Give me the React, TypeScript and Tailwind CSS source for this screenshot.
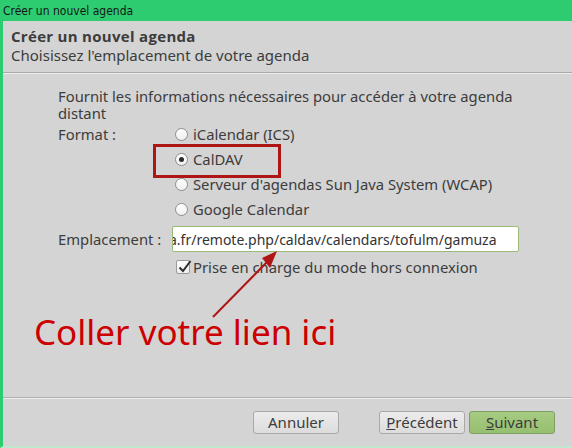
import React from "react";

const FormatRow = ({ label, checked = false }: { label: string; checked?: boolean }) => (
    <div className="h-[25px] flex items-center gap-[5px] pl-[3px]">
        <span className="w-[13px] h-[13px] rounded-full border border-[#8e8e8e] bg-gradient-to-b from-white to-[#f0f0f0] flex items-center justify-center shrink-0">
            {checked && <span className="w-[5px] h-[5px] rounded-full bg-[#2a2a2a]" />}
        </span>
        <span>{label}</span>
    </div>
);

const Button = ({ children, primary = false }: { children: React.ReactNode; primary?: boolean }) => (
    <div
        className={
            "w-[86px] h-[23px] flex items-center justify-center rounded-[3px] border " +
            (primary
                ? "bg-gradient-to-b from-[#a6cb82] to-[#97bf70] border-[#7f9f62]"
                : "bg-gradient-to-b from-[#ececec] to-[#dcdcdc] border-[#a9a9a9]")
        }
    >
        {children}
    </div>
);

export default function App() {
    return (
        <div
            className="relative w-[572px] h-[448px] overflow-hidden flex flex-col bg-[#d4d4d4] text-[#3c3c3c] text-[14.8px]"
            style={{ fontFamily: '"Noto Sans", sans-serif' }}
        >
            {/* Title bar */}
            <div
                className="h-[21px] shrink-0 bg-[#2ecc71] pl-[3px] flex items-center text-[12px] text-[#161616]"
                style={{ fontFamily: '"DejaVu Sans Condensed", "DejaVu Sans", sans-serif' }}
            >
                Créer un nouvel agenda
            </div>

            <div className="flex-1 flex flex-col border-l-[3px] border-l-[#2ecc71] border-b-2 border-b-[#bfe9cf]">
                {/* Header */}
                <div className="px-[8px] pt-[6px] pb-[7px] leading-[19px] text-[15px]">
                    <div className="font-bold text-[15px] tracking-[0.3px]" style={{ fontFamily: '"Open Sans", sans-serif' }}>
                        Créer un nouvel agenda
                    </div>
                    <div>Choisissez l'emplacement de votre agenda</div>
                </div>
                <div className="h-px bg-[#a9a9a9]" />
                <div className="h-px bg-[#ececec]" />

                {/* Body */}
                <div className="flex-1 pl-[55px] pt-[14px]">
                    <p className="leading-[17px] whitespace-nowrap">
                        Fournit les informations nécessaires pour accéder à votre agenda
                        <br />
                        distant
                    </p>
                    <div className="grid grid-cols-[114px_1fr]">
                        <div className="h-[25px] flex items-center">Format :</div>
                        <div>
                            <FormatRow label="iCalendar (ICS)" />
                            <FormatRow label="CalDAV" checked />
                            <FormatRow label="Serveur d'agendas Sun Java System (WCAP)" />
                            <FormatRow label="Google Calendar" />
                        </div>
                        <div className="mt-[4px] h-[26px] flex items-center">Emplacement :</div>
                        <div className="mt-[4px] w-[347px] h-[26px] flex items-center overflow-hidden bg-white border border-[#98bc78] rounded-[2px] whitespace-nowrap text-[14px] text-[#333]">
                            <span className="-ml-[4px]">a.fr/remote.php/caldav/calendars/tofulm/gamuza</span>
                        </div>
                        <div />
                        <div className="mt-[5px] h-[20px] flex items-center gap-[3px] pl-[4px]">
                            <span className="relative w-[14px] h-[14px] rounded-[2px] border border-[#9a9a9a] bg-gradient-to-b from-white to-[#eeeeee] shrink-0">
                                <svg className="absolute -top-[2px] left-0" width="16" height="16" viewBox="0 0 16 16">
                                    <path d="M2.5 8.5 L6 12 L13.5 2" fill="none" stroke="#2b2b2b" strokeWidth="2" />
                                </svg>
                            </span>
                            <span>Prise en charge du mode hors connexion</span>
                        </div>
                    </div>
                </div>

                {/* Footer */}
                <div className="h-px bg-[#b1b1b1]" />
                <div className="h-px bg-[#ececec]" />
                <div className="h-[47px] flex items-center pl-[250px] pr-[17px] text-[15px]">
                    <Button>Annuler</Button>
                    <div className="ml-[40px]">
                        <Button>
                            <span className="underline">P</span>récédent
                        </Button>
                    </div>
                    <div className="ml-[4px]">
                        <Button primary>
                            <span className="underline">S</span>uivant
                        </Button>
                    </div>
                </div>
            </div>

            {/* Annotations */}
            <div className="absolute left-[153px] top-[144px] w-[128px] h-[34px] border-[3px] border-[#ae1616]" />
            <svg className="absolute left-0 top-0 pointer-events-none" width="572" height="448">
                <line x1="213" y1="317" x2="268" y2="261" stroke="#b01515" strokeWidth="2" />
                <polygon points="277,251 262,258 270,268" fill="#b01515" />
            </svg>
            <div className="absolute left-[34px] top-[314px] text-[35px] leading-[35px] text-[#cc0000] whitespace-nowrap">
                Coller votre lien ici
            </div>
        </div>
    );
}
